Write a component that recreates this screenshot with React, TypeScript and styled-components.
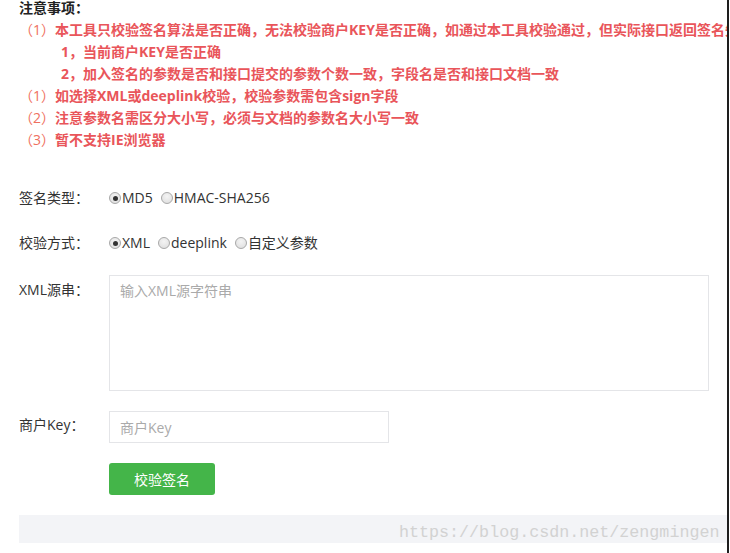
import React from "react";
import styled, { createGlobalStyle } from "styled-components";

const Global = createGlobalStyle`
  html, body { margin: 0; padding: 0; background: #fff; }
  body {
    font-family: "Open Sans", "Noto Sans CJK SC", sans-serif;
    font-size: 14px;
    color: #333;
    text-spacing-trim: space-all;
  }
  * { box-sizing: border-box; }
`;

const Frame = styled.div`
  position: relative;
  width: 729px;
  height: 553px;
  overflow: hidden;
  border-right: 2px solid #1e1e1e;
`;

const Page = styled.div`
  width: 1000px;
  padding: 0 0 0 19px;
`;

const Notice = styled.div`
  line-height: 22px;
  font-weight: 700;
  white-space: nowrap;
`;

const NoticeTitle = styled.div`
  color: #222;
  line-height: 16px;
  margin-bottom: 3px;
`;

const NoticeLine = styled.div<{ $indent?: boolean }>`
  color: #e9555a;
  padding-left: ${(p) => (p.$indent ? "42px" : "0")};
`;

const Paren = styled.span`
  font-weight: 400;
  color: #ef7060;
`;

const Form = styled.div`
  margin-top: 36px;
  width: 708px;
  display: flex;
  flex-direction: column;
`;

const Row = styled.div<{ $gap: number }>`
  display: flex;
  align-items: flex-start;
  margin-bottom: ${(p) => p.$gap}px;
`;

const Label = styled.div<{ $offset?: number }>`
  width: 90px;
  flex: none;
  line-height: 22px;
  padding-top: ${(p) => p.$offset ?? 0}px;
  color: #333;
  white-space: nowrap;
`;

const Options = styled.div`
  display: flex;
  align-items: center;
  gap: 8px;
  line-height: 22px;
  color: #333;
`;

const Option = styled.label`
  display: inline-flex;
  align-items: center;
`;

const Radio = styled.input.attrs({ type: "radio" })`
  appearance: none;
  -webkit-appearance: none;
  margin: 0 1px 0 0;
  width: 12px;
  height: 12px;
  border-radius: 50%;
  border: 1px solid #a8a8a8;
  background: radial-gradient(circle at 50% 35%, #f4f4f4 0%, #dcdcdc 100%);
  position: relative;
  &:checked::after {
    content: "";
    position: absolute;
    left: 2.5px;
    top: 2.5px;
    width: 5px;
    height: 5px;
    border-radius: 50%;
    background: #333;
  }
`;

const TextArea = styled.textarea`
  width: 600px;
  height: 116px;
  border: 1px solid #e4e5e8;
  padding: 4px 10px;
  font-family: inherit;
  font-size: 14px;
  line-height: 22px;
  resize: none;
  outline: none;
  &::placeholder { color: #aaa; }
`;

const Input = styled.input`
  width: 280px;
  height: 32px;
  border: 1px solid #e4e5e8;
  padding: 0 10px;
  font-family: inherit;
  font-size: 14px;
  outline: none;
  &::placeholder { color: #aaa; }
`;

const Button = styled.button`
  margin-left: 90px;
  width: 106px;
  height: 32px;
  border: none;
  border-radius: 3px;
  background: #44b549;
  color: #fff;
  font-family: inherit;
  font-size: 14px;
  cursor: pointer;
`;

const Result = styled.div`
  margin-top: 20px;
  height: 28px;
  width: 800px;
  background: #f3f4f7;
`;

const Watermark = styled.div`
  position: absolute;
  left: 399px;
  top: 523px;
  font-family: "Liberation Mono", monospace;
  font-size: 16.7px;
  line-height: 20px;
  color: #d2d2d2;
  white-space: nowrap;
`;

export default function App() {
  return (
    <>
      <Global />
      <Frame>
        <Page>
          <Notice>
            <NoticeTitle>注意事项：</NoticeTitle>
            <NoticeLine>
              <Paren>（1）</Paren>本工具只校验签名算法是否正确，无法校验商户KEY是否正确，如通过本工具校验通过，但实际接口返回签名失败，请检查：
            </NoticeLine>
            <NoticeLine $indent>1，当前商户KEY是否正确</NoticeLine>
            <NoticeLine $indent>2，加入签名的参数是否和接口提交的参数个数一致，字段名是否和接口文档一致</NoticeLine>
            <NoticeLine>
              <Paren>（1）</Paren>如选择XML或deeplink校验，校验参数需包含sign字段
            </NoticeLine>
            <NoticeLine>
              <Paren>（2）</Paren>注意参数名需区分大小写，必须与文档的参数名大小写一致
            </NoticeLine>
            <NoticeLine>
              <Paren>（3）</Paren>暂不支持IE浏览器
            </NoticeLine>
          </Notice>
          <Form>
            <Row $gap={23}>
              <Label>签名类型：</Label>
              <Options>
                <Option>
                  <Radio name="sigtype" defaultChecked />MD5
                </Option>
                <Option>
                  <Radio name="sigtype" />HMAC-SHA256
                </Option>
              </Options>
            </Row>
            <Row $gap={21}>
              <Label>校验方式：</Label>
              <Options>
                <Option>
                  <Radio name="mode" defaultChecked />XML
                </Option>
                <Option>
                  <Radio name="mode" />deeplink
                </Option>
                <Option>
                  <Radio name="mode" />自定义参数
                </Option>
              </Options>
            </Row>
            <Row $gap={20}>
              <Label $offset={4}>XML源串：</Label>
              <TextArea placeholder="输入XML源字符串" />
            </Row>
            <Row $gap={20}>
              <Label $offset={3}>商户Key：</Label>
              <Input placeholder="商户Key" />
            </Row>
            <Row $gap={0}>
              <Button>校验签名</Button>
            </Row>
            <Result />
          </Form>
        </Page>
        <Watermark>https://blog.csdn.net/zengmingen</Watermark>
      </Frame>
    </>
  );
}
